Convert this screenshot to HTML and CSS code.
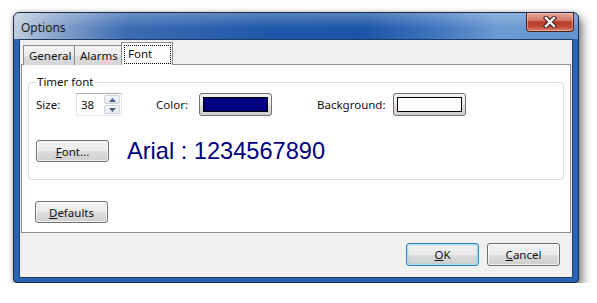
FILE: index.html
```html
<!DOCTYPE html>
<html lang="en">
  <head>
    <meta charset="UTF-8" />
    <title>Options</title>
    <link rel="stylesheet" href="styles.css">
  </head>
  <body>
    <div class="dialog">
      <div class="titlebar">
        <span class="title">Options</span>
        <button class="close" aria-label="Close">
          <svg width="16" height="12" viewBox="0 0 16 12">
            <path d="M4 2 L12 10 M12 2 L4 10" stroke="#3b1c18" stroke-width="4.4" stroke-linecap="square" />
            <path d="M4 2 L12 10 M12 2 L4 10" stroke="#ffffff" stroke-width="2.4" stroke-linecap="square" />
          </svg>
        </button>
      </div>

      <div class="client">
        <div class="tabs-area">
          <div class="tabs">
            <div class="tab tab-general">General</div>
            <div class="tab tab-alarms">Alarms</div>
            <div class="tab tab-active"><span class="focus">Font</span></div>
          </div>

          <div class="panel">
            <fieldset class="group">
              <legend>Timer font</legend>

              <div class="row row-colors">
                <label class="lbl lbl-size">Size:</label>
                <div class="spin">
                  <span class="spin-value">38</span>
                  <div class="spin-buttons">
                    <span class="spin-btn">
                      <svg width="7" height="4" viewBox="0 0 7 4"><path d="M0 4 L3.5 0 L7 4 Z" fill="#4d6185" /></svg>
                    </span>
                    <span class="spin-btn">
                      <svg width="7" height="4" viewBox="0 0 7 4"><path d="M0 0 L3.5 4 L7 0 Z" fill="#4d6185" /></svg>
                    </span>
                  </div>
                </div>

                <label class="lbl lbl-color">Color:</label>
                <button class="swatch-btn"><span class="swatch swatch-navy"></span></button>

                <label class="lbl lbl-bg">Background:</label>
                <button class="swatch-btn"><span class="swatch swatch-white"></span></button>
              </div>

              <div class="row row-font">
                <button class="btn btn-font"><u>F</u>ont...</button>
                <span class="preview">Arial : 1234567890</span>
              </div>
            </fieldset>

            <button class="btn btn-defaults"><u>D</u>efaults</button>
          </div>
        </div>

        <div class="bottom-bar">
          <button class="btn btn-default"><u>O</u>K</button>
          <button class="btn"><u>C</u>ancel</button>
        </div>
      </div>
    </div>
  </body>
</html>
```

FILE: styles.css
```css
* {
  box-sizing: border-box;
}

body {
  margin: 0;
  background: #ffffff;
  font-family: "Noto Sans", "Segoe UI", sans-serif;
  font-size: 11.5px;
  color: #111;
}

.dialog {
  margin: 12px 0 0 13px;
  width: 566px;
  height: 271px;
  border: 1px solid #1d2e4a;
  border-radius: 6px 6px 4px 4px;
  background: #2a62b4;
  box-shadow: 4px 6px 10px rgba(0, 0, 0, 0.45), 0 0 5px rgba(0, 0, 0, 0.25);
  display: flex;
  flex-direction: column;
}

.titlebar {
  height: 26px;
  display: flex;
  align-items: flex-start;
  justify-content: space-between;
  padding: 0 4px 0 7px;
  border-radius: 5px 5px 0 0;
  background:
    linear-gradient(180deg, rgba(255, 255, 255, 0.25) 0%, rgba(255, 255, 255, 0) 60%),
    linear-gradient(90deg, #c0cde0 0%, #8aa6cc 7%, #3b6cb3 20%, #1f58a8 45%, #1c55a6 62%, #3c73bc 74%, #6d9bd3 86%, #6494cf 100%);
}

.title {
  padding-top: 6px;
  font-size: 12px;
  color: #1b1b1b;
}

.close {
  width: 48px;
  height: 19px;
  margin: 0;
  padding: 0;
  border: 1px solid #4a201b;
  border-top: none;
  border-radius: 0 0 4px 4px;
  background: linear-gradient(180deg, #e9a89c 0%, #d47a6b 40%, #b83a2a 50%, #c04a37 75%, #d9826d 100%);
  box-shadow: inset 0 0 0 1px rgba(255, 220, 210, 0.45);
  display: flex;
  align-items: center;
  justify-content: center;
}

.client {
  flex: 1;
  margin: 0 5px 4px;
  border: 1px solid #1f3a63;
  background: #f0f0f0;
  display: flex;
  flex-direction: column;
}

.tabs-area {
  padding: 2px 1px 0 1px;
}

.tabs {
  display: flex;
  align-items: flex-end;
  padding-left: 2px;
  margin-bottom: -1px;
  position: relative;
  z-index: 1;
}

.tab {
  height: 20px;
  padding: 2px 0 0 5px;
  border: 1px solid #898c95;
  border-bottom: none;
  background: linear-gradient(180deg, #f3f3f3 0%, #ebebeb 50%, #dddddd 51%, #d6d6d6 100%);
}

.tab-general {
  width: 52px;
}

.tab-alarms {
  width: 47px;
  border-left: none;
}

.tab-active {
  width: 52px;
  height: 23px;
  margin-left: -1px;
  padding: 2px 0 0 2px;
  background: #ffffff;
}

.focus {
  display: block;
  width: 47px;
  height: 19px;
  padding-left: 3px;
  border: 1px dotted #000;
  line-height: 15px;
}

.panel {
  height: 169px;
  border: 1px solid #898c95;
  background: #ffffff;
  padding: 0 6px;
}

.group {
  margin: 10px 0 0 0;
  padding: 0 7px 15px;
  height: 105px;
  border: 1px solid #d5dfe5;
  border-radius: 3px;
}

.group legend {
  padding: 0 1px;
  line-height: 14px;
}

.row {
  display: flex;
  align-items: center;
}

.row-colors {
  margin-top: 4px;
}

.lbl {
  display: block;
}

.lbl-size {
  width: 40px;
}

.lbl-color {
  width: 43px;
  margin-left: 34px;
}

.lbl-bg {
  width: 76px;
  margin-left: 45px;
}

.spin {
  width: 46px;
  height: 23px;
  border: 1px solid #abadb3;
  border-color: #abadb3 #dbdfe6 #e3e9ef #e2e3ea;
  display: flex;
  justify-content: space-between;
  padding: 1px;
}

.spin-value {
  padding: 2px 0 0 3px;
}

.spin-buttons {
  width: 16px;
  display: flex;
  flex-direction: column;
  gap: 1px;
}

.spin-btn {
  flex: 1;
  border: 1px solid #cdd3db;
  border-radius: 2px;
  background: linear-gradient(180deg, #f6f8fa, #e4e9ef);
  display: flex;
  align-items: center;
  justify-content: center;
}

.swatch-btn {
  width: 73px;
  height: 23px;
  margin: 0;
  padding: 3px;
  border: 1px solid #707070;
  border-radius: 3px;
  background: linear-gradient(180deg, #f2f2f2 0%, #ebebeb 50%, #dddddd 51%, #cfcfcf 100%);
  display: flex;
}

.swatch {
  flex: 1;
  border: 1px solid #000;
}

.swatch-navy {
  background: #000080;
}

.swatch-white {
  background: #ffffff;
}

.row-font {
  margin-top: 23px;
}

.preview {
  margin-left: 18px;
  font-family: "Liberation Sans", Arial, sans-serif;
  font-size: 23.6px;
  line-height: 24px;
  color: #000080;
}

.btn {
  width: 73px;
  height: 23px;
  margin: 0;
  padding: 0;
  border: 1px solid #707070;
  border-radius: 3px;
  background: linear-gradient(180deg, #f2f2f2 0%, #ebebeb 50%, #dddddd 51%, #cfcfcf 100%);
  box-shadow: inset 0 0 0 1px rgba(255, 255, 255, 0.7);
  font-family: inherit;
  font-size: 11.5px;
  color: #111;
}

.btn u {
  text-decoration-thickness: 1px;
}

.btn-font {
  height: 22px;
}

.btn-defaults {
  display: block;
  margin: 21px 0 0 7px;
  height: 22px;
}

.bottom-bar {
  flex: 1;
  display: flex;
  justify-content: flex-end;
  gap: 8px;
  padding: 10px 12px 0 0;
}

.btn-default {
  border-color: #3c7fb1;
  box-shadow: inset 0 0 0 1px #9fe3fb, inset 0 0 2px 1px rgba(80, 200, 245, 0.5);
}
```
